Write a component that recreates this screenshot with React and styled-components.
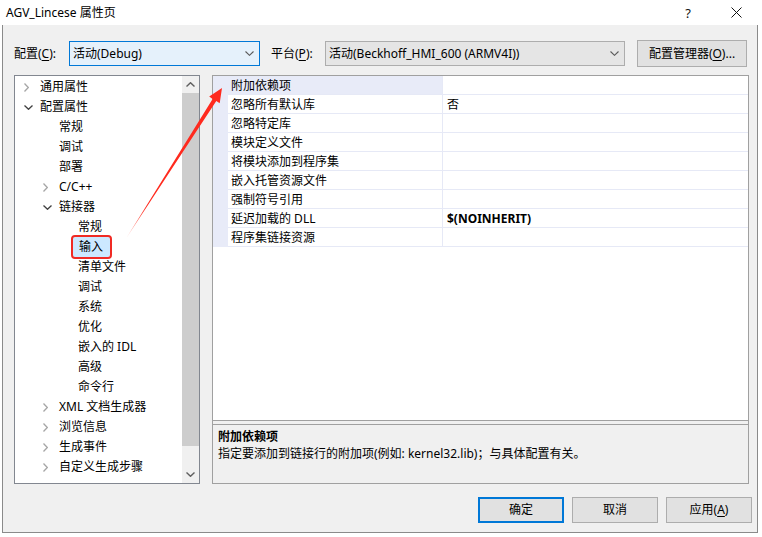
import React from 'react';
import styled, { createGlobalStyle } from 'styled-components';

const GlobalStyle = createGlobalStyle`
  html, body { margin: 0; padding: 0; background: #ffffff; }
  body {
    font-family: "Noto Sans", "Noto Sans CJK SC", sans-serif;
    font-size: 12px;
    color: #000;
  }
`;

const treeItems = [
  { label: '通用属性', level: 0, arrow: 'closed' },
  { label: '配置属性', level: 0, arrow: 'open' },
  { label: '常规', level: 1 },
  { label: '调试', level: 1 },
  { label: '部署', level: 1 },
  { label: 'C/C++', level: 1, arrow: 'closed' },
  { label: '链接器', level: 1, arrow: 'open' },
  { label: '常规', level: 2 },
  { label: '输入', level: 2, selected: true },
  { label: '清单文件', level: 2 },
  { label: '调试', level: 2 },
  { label: '系统', level: 2 },
  { label: '优化', level: 2 },
  { label: '嵌入的 IDL', level: 2 },
  { label: '高级', level: 2 },
  { label: '命令行', level: 2 },
  { label: 'XML 文档生成器', level: 1, arrow: 'closed' },
  { label: '浏览信息', level: 1, arrow: 'closed' },
  { label: '生成事件', level: 1, arrow: 'closed' },
  { label: '自定义生成步骤', level: 1, arrow: 'closed' },
];

const props = [
  { name: '附加依赖项', selected: true },
  { name: '忽略所有默认库', value: '否' },
  { name: '忽略特定库' },
  { name: '模块定义文件' },
  { name: '将模块添加到程序集' },
  { name: '嵌入托管资源文件' },
  { name: '强制符号引用' },
  { name: '延迟加载的 DLL', value: '$(NOINHERIT)', bold: true },
  { name: '程序集链接资源' },
];

export default function App() {
  return (
    <Root>
      <GlobalStyle />
      <TitleBar>
        <Title>AGV_Lincese 属性页</Title>
        <TitleButtons>
          <Help>?</Help>
          <CloseBtn>
            <svg width="11" height="11" viewBox="0 0 11 11">
              <path d="M0.5 0.5 L10.5 10.5 M10.5 0.5 L0.5 10.5" stroke="#111" strokeWidth="1" />
            </svg>
          </CloseBtn>
        </TitleButtons>
      </TitleBar>

      <Body>
        <TopRow>
          <FieldLabel $w={55}>配置(<u>C</u>):</FieldLabel>
          <Combo $w={191} $active>
            <span>活动(Debug)</span>
            <ComboArrow />
          </Combo>
          <FieldLabel $w={54} style={{ marginLeft: 11 }}>平台(<u>P</u>):</FieldLabel>
          <Combo $w={300}>
            <span>活动(Beckhoff_HMI_600 (ARMV4I))</span>
            <ComboArrow />
          </Combo>
          <ManagerButton>配置管理器(<u>O</u>)...</ManagerButton>
        </TopRow>

        <Main>
          <TreePanel>
            <TreeList>
              {treeItems.map((it, i) => (
                <TreeRow key={i} $level={it.level}>
                  <Chevron>
                    {it.arrow === 'closed' && (
                      <svg width="5" height="9" viewBox="0 0 5 9">
                        <path d="M0.5 0.5 L4.3 4.5 L0.5 8.5" fill="none" stroke="#a6a6a6" strokeWidth="1.3" />
                      </svg>
                    )}
                    {it.arrow === 'open' && (
                      <svg width="9" height="5" viewBox="0 0 9 5">
                        <path d="M0.5 0.5 L4.5 4.3 L8.5 0.5" fill="none" stroke="#404040" strokeWidth="1.3" />
                      </svg>
                    )}
                  </Chevron>
                  <TreeLabel $selected={it.selected}>{it.label}</TreeLabel>
                </TreeRow>
              ))}
            </TreeList>
            <ScrollBar>
              <ScrollBtn>
                <svg width="9" height="5" viewBox="0 0 9 5">
                  <path d="M0.5 4.5 L4.5 0.7 L8.5 4.5" fill="none" stroke="#606060" strokeWidth="1.4" />
                </svg>
              </ScrollBtn>
              <Thumb />
              <Track />
              <ScrollBtn>
                <svg width="9" height="5" viewBox="0 0 9 5">
                  <path d="M0.5 0.5 L4.5 4.3 L8.5 0.5" fill="none" stroke="#606060" strokeWidth="1.4" />
                </svg>
              </ScrollBtn>
            </ScrollBar>
          </TreePanel>

          <GridPanel>
            <GridArea>
              {props.map((p, i) => (
                <PropRow key={i}>
                  <Gutter />
                  <PropName $selected={p.selected}>{p.name}</PropName>
                  <PropValue $bold={p.bold}>{p.value || ''}</PropValue>
                </PropRow>
              ))}
            </GridArea>
            <Splitter />
            <HelpArea>
              <HelpTitle>附加依赖项</HelpTitle>
              <HelpText>指定要添加到链接行的附加项(例如: kernel32.lib)；与具体配置有关。</HelpText>
            </HelpArea>
          </GridPanel>
        </Main>

        <ButtonRow>
          <DlgButton $default>确定</DlgButton>
          <DlgButton>取消</DlgButton>
          <DlgButton>应用(<u>A</u>)</DlgButton>
        </ButtonRow>
      </Body>

      <Annotation width="762" height="537" viewBox="0 0 762 537">
        <defs>
          <linearGradient id="fade" x1="127" y1="237" x2="222" y2="88" gradientUnits="userSpaceOnUse">
            <stop offset="0" stopColor="#ff3a2a" stopOpacity="0.5" />
            <stop offset="0.2" stopColor="#ff2a1e" />
            <stop offset="1" stopColor="#ff2a1e" />
          </linearGradient>
        </defs>
        <polygon
          points="127,237 212.6,98.9 209.2,96.5 222,88 219.7,103.2 216.3,101.1"
          fill="url(#fade)"
        />
      </Annotation>
    </Root>
  );
}

function ComboArrow() {
  return (
    <ArrowBox>
      <svg width="9" height="5" viewBox="0 0 9 5">
        <path d="M0.5 0.5 L4.5 4.3 L8.5 0.5" fill="none" stroke="#5a5a5a" strokeWidth="1.1" />
      </svg>
    </ArrowBox>
  );
}

const Root = styled.div`
  position: relative;
  width: 762px;
  height: 537px;
  display: flex;
  flex-direction: column;
  overflow: hidden;
  background: #ffffff;
`;

const TitleBar = styled.div`
  height: 25px;
  flex: none;
  display: flex;
  align-items: center;
  justify-content: space-between;
  background: #ffffff;
  padding-left: 6px;
`;

const Title = styled.div`
  font-size: 12px;
  line-height: 16px;
  color: #000;
  margin-top: 1px;
`;

const TitleButtons = styled.div`
  display: flex;
  align-items: center;
  height: 100%;
`;

const Help = styled.div`
  width: 46px;
  text-align: center;
  font-size: 13px;
  line-height: 16px;
  color: #111;
  position: relative;
  left: -2px;
`;

const CloseBtn = styled.div`
  width: 46px;
  height: 100%;
  display: flex;
  align-items: center;
  justify-content: center;
  margin-right: 3px;
`;

const Body = styled.div`
  margin-left: 2px;
  width: 756px;
  height: 508px;
  background: #f0f0f0;
  border: 1px solid #8a8a8a;
  border-top: none;
  padding: 15px 0 0 11px;
  box-sizing: border-box;
  display: flex;
  flex-direction: column;
`;

const TopRow = styled.div`
  height: 27px;
  display: flex;
  align-items: center;
`;

const FieldLabel = styled.div`
  width: ${p => p.$w}px;
  flex: none;
  line-height: 16px;
  u { text-decoration: underline; text-underline-offset: 2px; }
`;

const Combo = styled.div`
  width: ${p => p.$w}px;
  height: 25px;
  box-sizing: border-box;
  flex: none;
  display: flex;
  align-items: center;
  justify-content: space-between;
  padding-left: 3px;
  background: ${p => (p.$active ? '#e5f1fb' : '#e5e5e5')};
  border: 1px solid ${p => (p.$active ? '#0078d7' : '#adadad')};
  span { line-height: 16px; }
`;

const ArrowBox = styled.div`
  width: 17px;
  height: 100%;
  display: flex;
  align-items: center;
  justify-content: center;
  margin-right: 1px;
`;

const ManagerButton = styled.div`
  margin-left: 12px;
  width: 110px;
  height: 27px;
  box-sizing: border-box;
  border: 1px solid #adadad;
  background: #e1e1e1;
  display: flex;
  align-items: center;
  justify-content: center;
  line-height: 16px;
  u { text-underline-offset: 2px; }
`;

const Main = styled.div`
  margin-top: 8px;
  height: 409px;
  display: flex;
  flex: none;
`;

const TreePanel = styled.div`
  width: 186px;
  height: 100%;
  box-sizing: border-box;
  border: 1px solid #828790;
  background: #ffffff;
  display: flex;
`;

const TreeList = styled.div`
  flex: 1;
  display: flex;
  flex-direction: column;
  padding-top: 1px;
`;

const TreeRow = styled.div`
  height: 20px;
  flex: none;
  display: flex;
  align-items: center;
  padding-left: ${p => 6 + p.$level * 19}px;
`;

const Chevron = styled.div`
  width: 13px;
  height: 20px;
  display: flex;
  align-items: center;
  padding-left: 3px;
  box-sizing: border-box;
  flex: none;
`;

const TreeLabel = styled.span`
  height: 20px;
  line-height: 20px;
  padding: 0 6px;
  white-space: nowrap;
  background: ${p => (p.$selected ? '#cce8ff' : 'transparent')};
  outline: ${p => (p.$selected ? '2px solid #f02a24' : 'none')};
  border-radius: 2px;
  margin-left: ${p => (p.$selected ? '1px' : '0')};
  padding-right: ${p => (p.$selected ? '7px' : '6px')};
`;

const ScrollBar = styled.div`
  width: 17px;
  background: #f0f0f0;
  display: flex;
  flex-direction: column;
`;

const ScrollBtn = styled.div`
  height: 17px;
  display: flex;
  align-items: center;
  justify-content: center;
  flex: none;
`;

const Thumb = styled.div`
  height: 353px;
  background: #cdcdcd;
  flex: none;
`;

const Track = styled.div`
  flex: 1;
`;

const GridPanel = styled.div`
  margin-left: 12px;
  width: 537px;
  height: 100%;
  box-sizing: border-box;
  border: 1px solid #a0a0a0;
  display: flex;
  flex-direction: column;
`;

const GridArea = styled.div`
  height: 345px;
  box-sizing: border-box;
  background: #ffffff;
  border-bottom: 1px solid #a0a0a0;
  flex: none;
`;

const PropRow = styled.div`
  display: grid;
  grid-template-columns: 15px 215px 1fr;
  height: 19px;
`;

const Gutter = styled.div`
  background: #e8ebf8;
`;

const PropName = styled.div`
  background: ${p => (p.$selected ? '#e8ebf8' : '#ffffff')};
  border-bottom: 1px solid #e6e9f6;
  border-right: 1px solid #e6e9f6;
  padding: 1px 0 0 3px;
  line-height: 17px;
  white-space: nowrap;
`;

const PropValue = styled.div`
  border-bottom: 1px solid #e6e9f6;
  padding: 1px 0 0 4px;
  line-height: 17px;
  font-weight: ${p => (p.$bold ? 700 : 400)};
`;

const Splitter = styled.div`
  height: 3px;
  flex: none;
  background: #f0f0f0;
`;

const HelpArea = styled.div`
  flex: 1;
  border-top: 1px solid #a0a0a0;
  background: #f0f0f0;
  padding: 3px 0 0 5px;
`;

const HelpTitle = styled.div`
  font-weight: 700;
  line-height: 17px;
`;

const HelpText = styled.div`
  line-height: 17px;
`;

const ButtonRow = styled.div`
  margin-top: 13px;
  display: flex;
  justify-content: flex-end;
  gap: 8px;
  padding-right: 5px;
`;

const DlgButton = styled.div`
  width: 86px;
  height: 26px;
  box-sizing: border-box;
  display: flex;
  align-items: center;
  justify-content: center;
  background: #e1e1e1;
  border: ${p => (p.$default ? '2px solid #0078d7' : '1px solid #adadad')};
  line-height: 16px;
  u { text-underline-offset: 2px; }
`;

const Annotation = styled.svg`
  position: absolute;
  left: 0;
  top: 0;
  pointer-events: none;
`;
